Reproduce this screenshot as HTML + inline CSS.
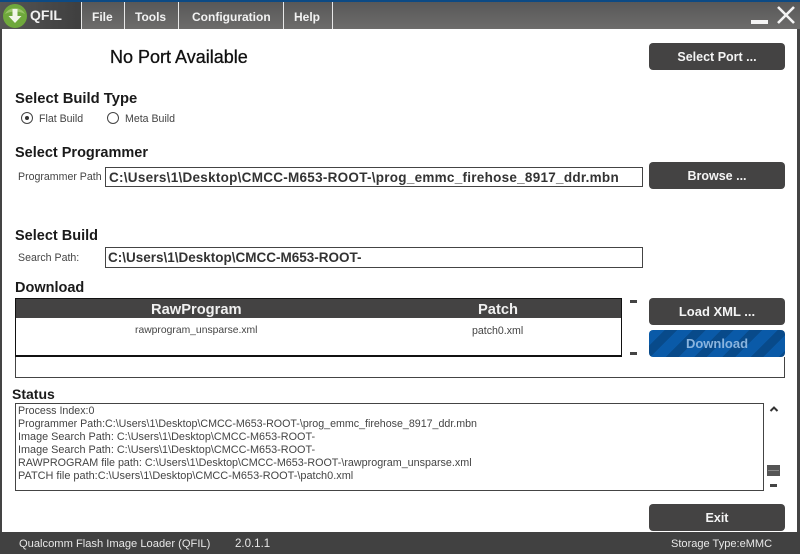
<!DOCTYPE html>
<html>
<head>
<meta charset="utf-8">
<style>
html,body{margin:0;padding:0;background:#fff;}
#r{position:relative;width:800px;height:554px;overflow:hidden;background:#fff;font-family:"Liberation Sans",sans-serif;color:#000;}
#r div{position:absolute;white-space:nowrap;}
.t{line-height:16px;}
.h{font-size:14.5px;font-weight:bold;color:#1a1a1a;line-height:16px;}
.s{font-size:10.6px;color:#444;line-height:14px;}
.m{font-size:12px;font-weight:bold;color:#f2f2f2;line-height:16px;top:9px;}
.sep{top:2px;width:1px;height:27px;background:#e8e8e8;}
.b{left:649px;width:136px;background:#444343;border-radius:4px;color:#f4f4f4;font-weight:bold;font-size:12.5px;text-align:center;height:27px;line-height:28px;}
.i{background:#fff;border:1px solid #444;box-sizing:border-box;font-size:13.5px;font-weight:bold;color:#333;padding-left:2px;}
.l{font-size:10.67px;line-height:13px;color:#444;left:18px;}
.d{background:#444;width:7px;height:3px;}
.f{font-size:11.15px;line-height:14px;color:#e8e8e8;top:537px;}
</style>
</head>
<body>
<div id="r">
<div style="left:0;top:0;width:800px;height:2px;background:#0c4a84"></div>
<div style="left:0;top:2px;width:800px;height:27px;background:linear-gradient(#585858,#6d6c6b)"></div>
<div style="left:0;top:2px;width:81px;height:27px;background:linear-gradient(90deg,#555 0%,#3f3f3f 100%)"></div>
<svg style="position:absolute;left:2px;top:3px" width="26" height="26" viewBox="0 0 26 26">
<circle cx="13" cy="13" r="12" fill="#6fa83c"/>
<path d="M3 11A11 10 0 0 1 23 11Q13 6 3 11Z" fill="#9ac46a"/>
<path d="M10.500 6h5v7h4l-6.500 7-6.500-7h4z" fill="#f2f5ea"/>
</svg>
<div class="t" style="left:30px;top:7px;font-size:14px;font-weight:bold;color:#f0f0f0">QFIL</div>
<div class="sep" style="left:81px"></div>
<div class="sep" style="left:124px"></div>
<div class="sep" style="left:178px"></div>
<div class="sep" style="left:283px"></div>
<div class="sep" style="left:332px"></div>
<div class="m" style="left:92px">File</div>
<div class="m" style="left:135px">Tools</div>
<div class="m" style="left:192px">Configuration</div>
<div class="m" style="left:294px">Help</div>
<svg style="position:absolute;left:748px;top:4px" width="50" height="22" viewBox="0 0 50 22">
<rect x="3" y="16" width="17" height="4" fill="#f4f4f4"/>
<path d="M30 3L46 19M46 3L30 19" stroke="#f4f4f4" stroke-width="2.6" fill="none"/>
</svg>
<div style="left:0;top:29px;width:2px;height:503px;background:#444"></div>
<div style="left:797px;top:29px;width:3px;height:503px;background:#444"></div>

<div style="left:110px;top:47px;font-size:18px;line-height:20px;color:#111;-webkit-text-stroke:.3px #111">No Port Available</div>
<div class="b" style="top:43px">Select Port ...</div>

<div class="h" style="left:15px;top:91px;font-size:14.8px">Select Build Type</div>
<svg style="position:absolute;left:20px;top:111px" width="100" height="14" viewBox="0 0 100 14">
<circle cx="7" cy="7" r="5.5" fill="#fff" stroke="#444"/>
<circle cx="7" cy="7" r="2" fill="#333"/>
<circle cx="93" cy="7" r="5.500" fill="#fff" stroke="#444"/>
</svg>
<div class="s" style="left:39px;top:112px">Flat Build</div>
<div class="s" style="left:125px;top:112px">Meta Build</div>

<div class="h" style="left:15px;top:145px">Select Programmer</div>
<div class="s" style="left:18px;top:170px">Programmer Path</div>
<div class="i" style="left:105px;top:167px;width:538px;height:20px;line-height:20px;letter-spacing:.27px;padding-left:3px">C:\Users\1\Desktop\CMCC-M653-ROOT-\prog_emmc_firehose_8917_ddr.mbn</div>
<div class="b" style="top:162px">Browse ...</div>

<div class="h" style="left:15px;top:228px">Select Build</div>
<div class="s" style="left:18px;top:251px">Search Path:</div>
<div class="i" style="left:105px;top:247px;width:538px;height:21px;line-height:20px">C:\Users\1\Desktop\CMCC-M653-ROOT-</div>

<div class="h" style="left:15px;top:280px">Download</div>
<div style="left:15px;top:298px;width:607px;height:59px;box-sizing:border-box;border:1px solid #111;border-bottom:2px solid #111;background:#fff"></div>
<div style="left:16px;top:299px;width:605px;height:19px;background:#444343"></div>
<div style="left:151px;top:302px;font-size:14.7px;line-height:16px;font-weight:bold;color:#f0f0f0">RawProgram</div>
<div style="left:478px;top:302px;font-size:14.7px;line-height:16px;font-weight:bold;color:#f0f0f0">Patch</div>
<div class="s" style="left:135px;top:324px;font-size:10.35px">rawprogram_unsparse.xml</div>
<div class="s" style="left:472px;top:324px">patch0.xml</div>
<div class="d" style="left:630px;top:300px"></div>
<div class="d" style="left:630px;top:352px"></div>

<div class="b" style="top:298px;font-size:13px">Load XML ...</div>
<div class="b" style="top:330px;color:#8ab4de;font-size:13px;background:repeating-linear-gradient(135deg,#0a5aa8 0 11px,#084a8a 11px 20px)">Download</div>

<div style="left:15px;top:357px;width:770px;height:21px;box-sizing:border-box;border:1px solid #444;border-top:none;background:#fff"></div>

<div class="h" style="left:12px;top:386px;font-size:14px">Status</div>
<div style="left:15px;top:403px;width:749px;height:88px;box-sizing:border-box;border:1px solid #444;background:#fff"></div>
<div class="l" style="top:405px">Process Index:0</div>
<div class="l" style="top:418px">Programmer Path:C:\Users\1\Desktop\CMCC-M653-ROOT-\prog_emmc_firehose_8917_ddr.mbn</div>
<div class="l" style="top:431px;font-size:10.85px">Image Search Path: C:\Users\1\Desktop\CMCC-M653-ROOT-</div>
<div class="l" style="top:444px;font-size:10.85px">Image Search Path: C:\Users\1\Desktop\CMCC-M653-ROOT-</div>
<div class="l" style="top:457px;font-size:10.76px">RAWPROGRAM file path: C:\Users\1\Desktop\CMCC-M653-ROOT-\rawprogram_unsparse.xml</div>
<div class="l" style="top:470px;font-size:10.93px">PATCH file path:C:\Users\1\Desktop\CMCC-M653-ROOT-\patch0.xml</div>

<svg style="position:absolute;left:769px;top:405px" width="10" height="8" viewBox="0 0 10 8"><path d="M1.500 6L5 2.500 8.500 6" stroke="#333" stroke-width="2" fill="none"/></svg>
<div style="left:767px;top:465px;width:13px;height:11px;background:#555"></div>
<div style="left:768px;top:470px;width:11px;height:1px;background:#888"></div>
<div class="d" style="left:770px;top:484px"></div>

<div class="b" style="top:504px;font-size:12.5px">Exit</div>

<div style="left:0;top:532px;width:800px;height:22px;background:#414141"></div>
<div class="f" style="left:19px">Qualcomm Flash Image Loader (QFIL)</div>
<div class="f" style="left:235px;font-size:11.5px">2.0.1.1</div>
<div class="f" style="left:671px;font-size:11.05px">Storage Type:eMMC</div>
</div>
</body>
</html>
